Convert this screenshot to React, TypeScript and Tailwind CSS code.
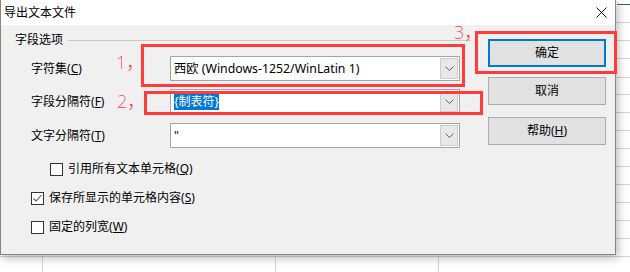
import React from 'react'

const FONT = 'font-["Noto_Sans","Noto_Sans_CJK_SC",sans-serif]'

function Chevron() {
  return (
    <svg width="9" height="5" viewBox="0 0 9 5" fill="none">
      <path d="M0.5 0.5 L4.5 4.5 L8.5 0.5" stroke="#606060" strokeWidth="1" />
    </svg>
  )
}

function Combo({ children }: { children: React.ReactNode }) {
  return (
    <div className="w-[290px] h-[25px] bg-white border border-[#a5a5a5] flex items-center justify-between pl-[3px] pr-px">
      <div className="leading-[16px] whitespace-nowrap">{children}</div>
      <div className="w-[18px] h-[21px] bg-[#e8e8e8] border border-[#cccccc] flex items-center justify-center">
        <Chevron />
      </div>
    </div>
  )
}

function Field({ label, k, children, gap }: { label: string; k: string; children: React.ReactNode; gap: string }) {
  return (
    <div className={`flex items-center ${gap}`}>
      <div className="w-[155px] pl-[16px] leading-[16px]">
        {label}(<span className="underline">{k}</span>)
      </div>
      <Combo>{children}</Combo>
    </div>
  )
}

function CheckBox({ checked }: { checked?: boolean }) {
  return (
    <div className="w-[13px] h-[13px] bg-white border border-[#333333] flex items-center justify-center">
      {checked && (
        <svg width="11" height="11" viewBox="0 0 11 11" fill="none">
          <path d="M1.5 5.5 L4 8 L9.5 2" stroke="#555555" strokeWidth="1.1" />
        </svg>
      )}
    </div>
  )
}

function Check({ label, k, checked, indent, gap }: { label: string; k: string; checked?: boolean; indent: string; gap: string }) {
  return (
    <div className={`flex items-center h-[18px] gap-[5px] ${indent} ${gap}`}>
      <CheckBox checked={checked} />
      <span className="leading-[16px]">
        {label}(<span className="underline">{k}</span>)
      </span>
    </div>
  )
}

function Button({ children, primary, gap }: { children: React.ReactNode; primary?: boolean; gap?: string }) {
  return (
    <div
      className={`w-[118px] h-[28px] bg-[#e1e1e1] flex items-center justify-center leading-[16px] ${
        primary ? 'border-2 border-[#0078d7]' : 'border border-[#adadad]'
      } ${gap || ''}`}
    >
      {children}
    </div>
  )
}

const ROWS = [22, 40, 58, 77, 94, 112, 130, 148, 166, 184, 202, 220, 238, 256]

export default function App() {
  return (
    <div className={`relative w-[630px] h-[272px] overflow-hidden bg-white text-[12px] text-black ${FONT}`}>
      {/* spreadsheet behind the dialog */}
      <div className="absolute left-[617px] top-[4px] w-[13px] h-px bg-[#217346]" />
      {ROWS.map((y) => (
        <div key={y} className="absolute left-0 w-[630px] h-px bg-[#d4d4d4]" style={{ top: y }} />
      ))}
      {[42, 275, 438].map((x) => (
        <div key={x} className="absolute top-0 w-px h-[272px] bg-[#d4d4d4]" style={{ left: x }} />
      ))}

      {/* dialog window */}
      <div className="absolute left-0 top-0 w-[616px] h-[255px] bg-[#f0f0f0] border-l border-r border-b border-[#858585] shadow-[2px_3px_9px_rgba(0,0,0,0.28)] flex flex-col">
        <div className="h-[25px] bg-white flex items-center justify-between pl-[3px] pr-[8px]">
          <span className="leading-[16px]">导出文本文件</span>
          <svg width="11" height="11" viewBox="0 0 11 11" fill="none">
            <path d="M0.5 0.5 L10.5 10.5 M10.5 0.5 L0.5 10.5" stroke="#111111" strokeWidth="1" />
          </svg>
        </div>

        <div className="flex flex-1">
          {/* group box */}
          <div className="w-[470px] pl-[14px] pt-[8px] flex flex-col">
            <div className="flex items-center h-[14px] gap-[5px]">
              <span className="leading-[16px]">字段选项</span>
              <div className="flex-1 h-px bg-[#c8c8c8]" />
            </div>

            <Field label="字符集" k="C" gap="mt-[9px]">
              <span className="text-[12.3px]">西欧 (Windows-1252/WinLatin 1)</span>
            </Field>
            <Field label="字段分隔符" k="F" gap="mt-[8px]">
              <span className="bg-[#0078d7] text-white">{'{制表符}'}</span>
            </Field>
            <Field label="文字分隔符" k="T" gap="mt-[9px]">
              "
            </Field>

            <Check label="引用所有文本单元格" k="Q" indent="ml-[35px]" gap="mt-[12px]" />
            <Check label="保存所显示的单元格内容" k="S" checked indent="ml-[16px]" gap="mt-[11px]" />
            <Check label="固定的列宽" k="W" indent="ml-[16px]" gap="mt-[11px]" />
          </div>

          {/* buttons */}
          <div className="pl-[17px] pt-[14px] flex flex-col">
            <Button primary>确定</Button>
            <Button gap="mt-[10px]">取消</Button>
            <Button gap="mt-[12px]">
              <span>
                帮助(<span className="underline">H</span>)
              </span>
            </Button>
          </div>
        </div>
      </div>

      {/* red annotations */}
      <div className="absolute left-[141px] top-[44px] w-[324px] h-[43px] border-[3px] border-[#ff3b3b]" />
      <div className="absolute left-[144px] top-[91px] w-[339px] h-[24px] border-[3px] border-[#ff3b3b]" />
      <div className="absolute left-[475px] top-[31px] w-[142px] h-[43px] border-[3px] border-[#ff3b3b]" />
      <span className="absolute left-[116px] top-[52px] text-[18px] leading-[20px] text-[#ff3b3b] font-extralight">1，</span>
      <span className="absolute left-[117px] top-[91px] text-[18px] leading-[20px] text-[#ff3b3b] font-extralight">2，</span>
      <span className="absolute left-[454px] top-[22px] text-[18px] leading-[20px] text-[#ff3b3b] font-extralight">3，</span>
    </div>
  )
}
